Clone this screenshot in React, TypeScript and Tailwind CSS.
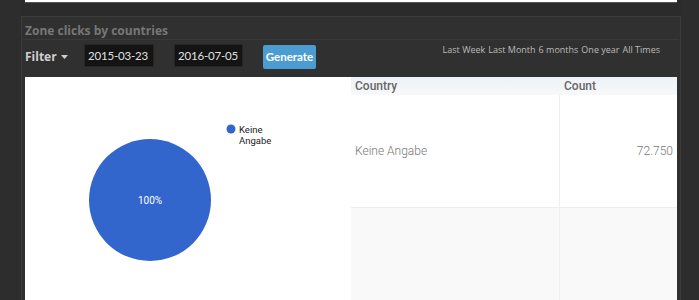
import React from "react";

const ranges = ["Last Week", "Last Month", "6 months", "One year", "All Times"];

const PieChart: React.FC = () => (
  <div className="relative h-full w-full">
    <svg width="326" height="223" className="block">
      <circle cx="125" cy="123" r="61" fill="#3366cc" />
      <text x="125" y="127" textAnchor="middle" fontSize="10" fill="#ffffff" fontFamily="Roboto, Arial, sans-serif">
        100%
      </text>
      <circle cx="206" cy="52" r="4.5" fill="#3366cc" />
      <text x="214" y="56" fontSize="9.5" fill="#222222" fontFamily="Roboto, Arial, sans-serif">
        Keine
      </text>
      <text x="214" y="67" fontSize="9.5" fill="#222222" fontFamily="Roboto, Arial, sans-serif">
        Angabe
      </text>
    </svg>
  </div>
);

const CountryTable: React.FC = () => (
  <div className="flex h-full flex-col font-['Roboto',sans-serif] text-[12px]">
    <div className="flex h-[18px] items-center bg-gradient-to-b from-[#eef1f6] to-[#f7f9fb] text-[#666]">
      <div className="w-[208px] pl-[4px] font-medium">Country</div>
      <div className="flex-1 pl-[5px] font-medium">Count</div>
    </div>
    <div className="flex h-[113px] border-b border-[#eeeeee] font-light text-[#777]">
      <div className="flex w-[208px] items-center pl-[4px]">Keine Angabe</div>
      <div className="flex flex-1 items-center justify-end border-l border-[#f0f0f0] pr-[4px]">72.750</div>
    </div>
    <div className="flex flex-1 bg-[#f9f9f9]">
      <div className="w-[208px]" />
      <div className="flex-1 border-l border-[#f0f0f0]" />
    </div>
  </div>
);

export default function App() {
  return (
    <div className="flex h-[300px] w-[699px] overflow-hidden bg-[#2b2b2b]">
      <div className="w-[21px] shrink-0 bg-[#2d2d2d]" />
      <div className="flex w-[660px] shrink-0 flex-col">
        <div className="ml-[4px] h-[3px] w-[652px] border-b border-[#555] bg-white" />
        <div className="h-[13px]" />
        <div className="flex flex-1 flex-col border border-b-0 border-[#3b3b3b] bg-[#303030]">
          <div className="flex h-[22px] items-end pb-[2px] pl-[3px] font-['Open_Sans',sans-serif] text-[12px] font-bold leading-none text-[#777]">
            Zone clicks by countries
          </div>
          <div className="mx-[1px] border-t border-[#3a3a3a]" />
          <div className="flex h-[37px] items-start pl-[3px] pt-[4px]">
            <div className="mt-[4px] flex w-[59px] items-center gap-[4px] font-['Open_Sans',sans-serif] text-[12px] font-bold text-[#cfcfcf]">
              Filter
              <svg width="7" height="4" viewBox="0 0 7 4">
                <path d="M0 0h7L3.5 4z" fill="#cfcfcf" />
              </svg>
            </div>
            <div className="flex h-[23px] w-[70px] items-center whitespace-nowrap border border-[#262626] bg-[#141414] pl-[3px] font-['Lato',sans-serif] text-[11.5px] tracking-[-0.2px] text-[#e0e0e0]">
              2015-03-23
            </div>
            <div className="w-[20px]" />
            <div className="flex h-[23px] w-[69px] items-center whitespace-nowrap border border-[#262626] bg-[#141414] pl-[3px] font-['Lato',sans-serif] text-[11.5px] tracking-[-0.2px] text-[#e0e0e0]">
              2016-07-05
            </div>
            <div className="w-[20px]" />
            <button className="mt-[1px] flex h-[24px] w-[53px] items-center justify-center rounded-[2px] bg-[#4b9cd0] font-['Lato',sans-serif] text-[11.5px] font-bold text-white">
              Generate
            </button>
            <div className="ml-auto mr-[20px] mt-[-1px] flex gap-[3px] whitespace-nowrap font-['Open_Sans',sans-serif] text-[9px] text-[#bbbbbb]">
              {ranges.map((r) => (
                <span key={r}>{r}</span>
              ))}
            </div>
          </div>
          <div className="mx-[3px] flex flex-1 bg-white">
            <div className="w-[326px] shrink-0">
              <PieChart />
            </div>
            <div className="flex-1">
              <CountryTable />
            </div>
          </div>
        </div>
      </div>
      <div className="flex-1 bg-[#2d2d2d]" />
    </div>
  );
}
